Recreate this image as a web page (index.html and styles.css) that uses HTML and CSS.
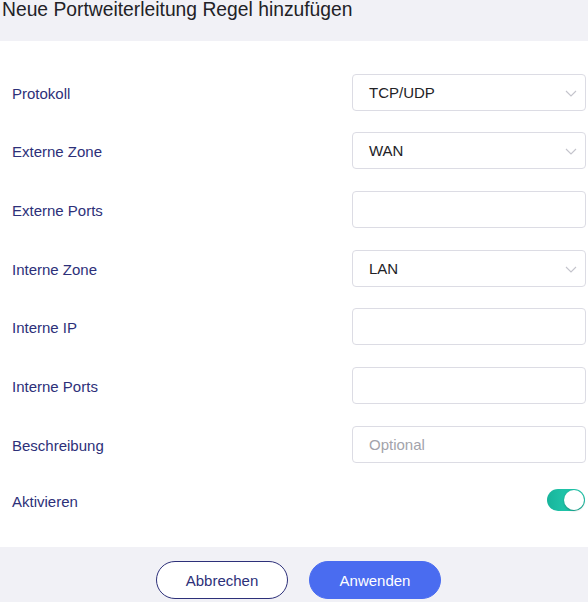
FILE: index.html
```html
<!DOCTYPE html>
<html lang="de">
<head>
<meta charset="utf-8">
<title>Portweiterleitung</title>
<link rel="stylesheet" href="styles.css">
</head>
<body>
<div class="dialog">
  <header class="head">
    <h1 class="title">Neue Portweiterleitung Regel hinzufügen</h1>
  </header>
  <main class="form">
    <div class="row">
      <span class="label">Protokoll</span>
      <div class="field select"><span class="value">TCP/UDP</span>
        <svg class="chev" viewBox="0 0 12 7" width="12" height="7"><path d="M1 1 L6 6 L11 1" fill="none" stroke="#c4c4cc" stroke-width="1.1"/></svg></div>
    </div>
    <div class="row">
      <span class="label">Externe Zone</span>
      <div class="field select"><span class="value">WAN</span>
        <svg class="chev" viewBox="0 0 12 7" width="12" height="7"><path d="M1 1 L6 6 L11 1" fill="none" stroke="#c4c4cc" stroke-width="1.1"/></svg></div>
    </div>
    <div class="row">
      <span class="label">Externe Ports</span>
      <div class="field"></div>
    </div>
    <div class="row">
      <span class="label">Interne Zone</span>
      <div class="field select"><span class="value">LAN</span>
        <svg class="chev" viewBox="0 0 12 7" width="12" height="7"><path d="M1 1 L6 6 L11 1" fill="none" stroke="#c4c4cc" stroke-width="1.1"/></svg></div>
    </div>
    <div class="row">
      <span class="label">Interne IP</span>
      <div class="field"></div>
    </div>
    <div class="row">
      <span class="label">Interne Ports</span>
      <div class="field"></div>
    </div>
    <div class="row">
      <span class="label">Beschreibung</span>
      <div class="field"><span class="placeholder">Optional</span></div>
    </div>
    <div class="row row-toggle">
      <span class="label">Aktivieren</span>
      <div class="toggle"><span class="knob"></span></div>
    </div>
  </main>
  <footer class="foot">
    <button class="btn btn-cancel">Abbrechen</button>
    <button class="btn btn-apply">Anwenden</button>
  </footer>
</div>
</body>
</html>
```
FILE: styles.css
```css
html, body {
  margin: 0;
  padding: 0;
  background: #ffffff;
}
body {
  font-family: "Liberation Sans", Arial, sans-serif;
  width: 588px;
  height: 602px;
  overflow: hidden;
}
.dialog {
  display: flex;
  flex-direction: column;
  height: 602px;
}
.head {
  background: #f1f1f6;
  height: 41px;
  flex: none;
}
.title {
  margin: 0;
  padding: 0 0 0 2px;
  font-size: 19.3px;
  line-height: 20px;
  font-weight: normal;
  color: #222226;
}
.form {
  flex: 1;
  padding: 22px 2px 0 12px;
}
.row {
  display: flex;
  align-items: center;
  justify-content: space-between;
  height: 58.67px;
}
.row-toggle {
  height: 49px;
  padding-top: 2px;
}
.label {
  font-size: 15px;
  color: #2d3079;
  padding-top: 2px;
}
.field {
  width: 232px;
  height: 35px;
  border: 1px solid #dcdce4;
  border-radius: 4px;
  display: flex;
  align-items: center;
  padding: 0;
  position: relative;
  font-size: 15px;
}
.value {
  margin-left: 16px;
  color: #222226;
}
.placeholder {
  margin-left: 16px;
  color: #a3a3ab;
}
.chev {
  position: absolute;
  right: 8px;
  top: 15px;
}
.toggle {
  width: 38px;
  height: 22px;
  border-radius: 11px;
  background: linear-gradient(90deg, #17b49b 0%, #1fc2a7 40%);
  position: relative;
  margin-right: 1px;
}
.knob {
  position: absolute;
  right: 1px;
  top: 1px;
  width: 20px;
  height: 20px;
  border-radius: 50%;
  background: #ffffff;
  box-shadow: 0 1px 2px rgba(0,0,0,0.25);
}
.foot {
  background: #f1f1f6;
  height: 55px;
  flex: none;
  display: flex;
  align-items: flex-start;
  justify-content: flex-start;
  padding-left: 156px;
  gap: 21px;
  box-sizing: border-box;
  padding-top: 14px;
}
.btn {
  width: 132px;
  height: 38px;
  border-radius: 19px;
  font-family: "Liberation Sans", Arial, sans-serif;
  font-size: 15px;
  cursor: pointer;
  padding: 0;
}
.btn-cancel {
  background: #ffffff;
  border: 1px solid #2d3079;
  color: #2d3079;
}
.btn-apply {
  background: #4a6cf0;
  border: 1px solid #4a6cf0;
  color: #ffffff;
}
```
